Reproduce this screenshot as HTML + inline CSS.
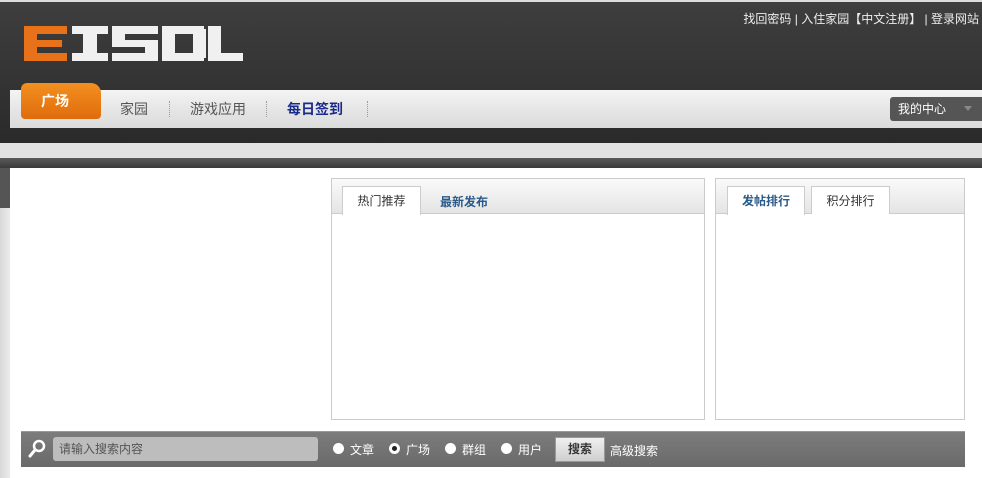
<!DOCTYPE html>
<html><head><meta charset="utf-8"><style>
*{margin:0;padding:0;box-sizing:border-box}
body{width:982px;height:478px;overflow:hidden;background:#fff;font-family:"Liberation Sans","Noto Sans CJK SC",sans-serif;font-size:12px;position:relative}
.abs{position:absolute}
.r{position:absolute;top:443px;width:11px;height:11px;border-radius:50%;background:#fff}
.rl{position:absolute;top:441px;color:#fff;font-size:12px}
</style></head><body>
<div class="abs" style="left:0;top:0;width:982px;height:2px;background:#ddd"></div>
<div class="abs" style="left:0;top:2px;width:982px;height:141px;background:linear-gradient(#3e3e3e,#333 60%,#2a2a2a)"></div>
<div class="abs" style="right:3px;top:10px;color:#eee;font-size:12px;white-space:nowrap">找回密码&nbsp;|&nbsp;入住家园【中文注册】&nbsp;|&nbsp;登录网站</div>
<svg class="abs" style="left:24px;top:26px" width="220" height="36">
<g fill="#e8721a"><rect x="0" y="0" width="43" height="8"/><rect x="0" y="0" width="13" height="35"/><rect x="0" y="14" width="38" height="7"/><rect x="0" y="27" width="43" height="8"/></g>
<g fill="#f0f0f0"><rect x="48" y="0" width="36" height="8"/><rect x="59" y="0" width="14" height="35"/><rect x="48" y="27" width="36" height="8"/>
<rect x="88" y="0" width="46" height="8"/><rect x="88" y="0" width="13" height="20"/><rect x="88" y="14" width="46" height="7"/><rect x="121" y="14" width="13" height="21"/><rect x="88" y="27" width="46" height="8"/>
<rect x="138" y="0" width="42" height="8"/><rect x="138" y="0" width="13" height="35"/><rect x="169" y="3" width="13" height="29"/><rect x="138" y="27" width="42" height="8"/>
<rect x="184" y="0" width="13" height="35"/><rect x="184" y="27" width="35" height="8"/></g></svg>
<div class="abs" style="left:10px;top:90px;width:972px;height:38px;background:linear-gradient(#f4f4f4,#e6e6e6 50%,#dcdcdc)"></div>
<div class="abs" style="left:21px;top:83px;width:80px;height:36px;border-radius:6px 10px 4px 4px;background:linear-gradient(#f39020,#e06c0c);color:#fff;font-weight:bold;font-size:14px;line-height:36px;padding-left:20px">广场</div>
<div class="abs" style="left:120px;top:99px;color:#555;font-size:14px">家园</div>
<div class="abs" style="left:169px;top:101px;height:16px;border-left:1px dotted #999"></div>
<div class="abs" style="left:190px;top:99px;color:#555;font-size:14px">游戏应用</div>
<div class="abs" style="left:266px;top:101px;height:16px;border-left:1px dotted #999"></div>
<div class="abs" style="left:287px;top:99px;color:#1a2a8a;font-size:14px;font-weight:bold">每日签到</div>
<div class="abs" style="left:367px;top:101px;height:16px;border-left:1px dotted #999"></div>
<div class="abs" style="left:890px;top:97px;width:92px;height:24px;background:#555;border-radius:3px 0 0 3px;color:#fff;font-size:12px;line-height:24px;padding-left:8px">我的中心<span style="position:absolute;left:74px;top:9px;border:4px solid transparent;border-top:5px solid #888"></span></div>
<div class="abs" style="left:0;top:143px;width:982px;height:15px;background:#e2e2e2"></div>
<div class="abs" style="left:0;top:158px;width:982px;height:10px;background:linear-gradient(#5a5a5a,#3a3a3a)"></div>
<div class="abs" style="left:0;top:168px;width:10px;height:310px;background:linear-gradient(90deg,#d8d8d8,#ececec)"></div>
<div class="abs" style="left:0;top:168px;width:10px;height:40px;background:#555"></div>
<div class="abs" style="left:331px;top:178px;width:374px;height:242px;border:1px solid #ccc;background:#fff"></div>
<div class="abs" style="left:332px;top:179px;width:372px;height:35px;background:linear-gradient(#fafafa,#e4e4e4);border-bottom:1px solid #ccc"></div>
<div class="abs" style="left:342px;top:186px;width:79px;height:29px;background:#fff;border:1px solid #ccc;border-bottom:none;text-align:center;line-height:28px;color:#333">热门推荐</div>
<div class="abs" style="left:440px;top:193px;color:#2a5a8a;font-weight:bold;font-size:12px">最新发布</div>
<div class="abs" style="left:715px;top:178px;width:250px;height:242px;border:1px solid #ccc;background:#fff"></div>
<div class="abs" style="left:716px;top:179px;width:248px;height:35px;background:linear-gradient(#fafafa,#e4e4e4);border-bottom:1px solid #ccc"></div>
<div class="abs" style="left:727px;top:186px;width:78px;height:29px;background:#fff;border:1px solid #ccc;border-bottom:none;text-align:center;line-height:28px;color:#2a5a8a;font-weight:bold">发帖排行</div>
<div class="abs" style="left:811px;top:186px;width:79px;height:28px;background:#fff;border:1px solid #ccc;border-bottom:none;text-align:center;line-height:28px;color:#333">积分排行</div>
<div class="abs" style="left:21px;top:431px;width:944px;height:36px;background:linear-gradient(#7c7c7c,#6a6a6a);border-top:1px solid #999"></div>
<svg class="abs" style="left:27px;top:439px" width="20" height="20"><circle cx="12" cy="7" r="5" fill="none" stroke="#fff" stroke-width="2.5"/><line x1="8" y1="11" x2="3" y2="17" stroke="#fff" stroke-width="3" stroke-linecap="round"/></svg>
<div class="abs" style="left:53px;top:437px;width:265px;height:24px;background:#bdbdbd;border-radius:3px;color:#555;font-size:12px;line-height:24px;padding-left:6px">请输入搜索内容</div>
<div class="r" style="left:333px"></div><div class="rl" style="left:350px">文章</div>
<div class="r" style="left:389px;box-shadow:inset 0 0 0 3px #fff,inset 0 0 0 6px #222"></div><div class="rl" style="left:406px">广场</div>
<div class="r" style="left:445px"></div><div class="rl" style="left:462px">群组</div>
<div class="r" style="left:501px"></div><div class="rl" style="left:518px">用户</div>
<div class="abs" style="left:555px;top:437px;width:50px;height:25px;background:linear-gradient(#f0f0f0,#cfcfcf);border:1px solid #999;text-align:center;line-height:23px;font-weight:bold;color:#333">搜索</div>
<div class="abs" style="left:610px;top:442px;color:#fff">高级搜索</div>
</body></html>
